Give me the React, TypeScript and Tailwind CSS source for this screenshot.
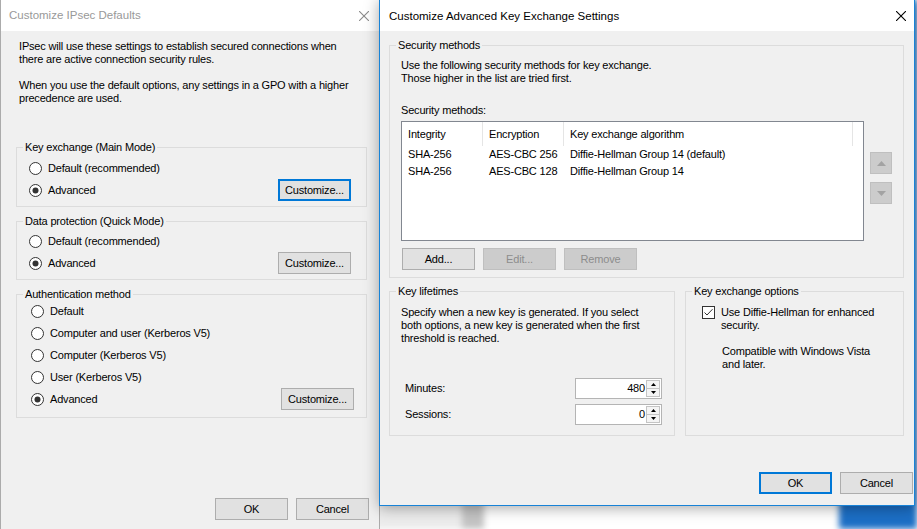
import type { ReactNode } from 'react';

function CloseX({ color }: { color: string }) {
  return (
    <svg width="10" height="10" viewBox="0 0 10 10" fill="none" stroke={color} strokeWidth="1.1">
      <path d="M0 0L10 10M10 0L0 10" />
    </svg>
  );
}

function Button({
  children,
  primary = false,
  disabled = false,
}: {
  children: ReactNode;
  primary?: boolean;
  disabled?: boolean;
}) {
  const look = primary
    ? 'border-2 border-[#0078d7] bg-[#e1e1e1] text-black'
    : disabled
      ? 'border border-[#bfbfbf] bg-[#cccccc] text-[#8c8c8c]'
      : 'border border-[#adadad] bg-[#e1e1e1] text-black';
  return (
    <button
      type="button"
      className={`flex h-[22px] w-[73px] shrink-0 items-center justify-center ${look}`}
    >
      {children}
    </button>
  );
}

function Radio({ checked = false }: { checked?: boolean }) {
  return (
    <svg width="13" height="13" viewBox="0 0 13 13" className="shrink-0">
      <circle cx="6.5" cy="6.5" r="6" fill="#fff" stroke="#333" />
      {checked && <circle cx="6.5" cy="6.5" r="3" fill="#333" />}
    </svg>
  );
}

function RadioRow({ label, checked = false, children }: { label: string; checked?: boolean; children?: ReactNode }) {
  return (
    <div className="flex h-[22px] items-center justify-between">
      <div className="flex items-center gap-[6px]">
        <Radio checked={checked} />
        <span>{label}</span>
      </div>
      {children}
    </div>
  );
}

function Group({ title, className = '', children }: { title: string; className?: string; children: ReactNode }) {
  return (
    <fieldset className={`min-w-0 border border-[#dcdcdc] ${className}`}>
      <legend className="ml-[6px] px-[2px] leading-[13px]">{title}</legend>
      {children}
    </fieldset>
  );
}

function ArrowBtn({ up }: { up: boolean }) {
  return (
    <div className="flex h-[22px] w-[22px] items-center justify-center border border-[#bfbfbf] bg-[#cccccc]">
      <svg width="9" height="5" viewBox="0 0 9 5">
        <path d={up ? 'M0 5L4.5 0L9 5Z' : 'M0 0L4.5 5L9 0Z'} fill="#a3a3a3" />
      </svg>
    </div>
  );
}

function Spin({ value }: { value: string }) {
  return (
    <div className="flex h-[21px] w-[87px] border border-[#b4b4b4] bg-white">
      <div className="flex flex-1 items-center justify-end pr-[1px]">{value}</div>
      <div className="flex w-[15px] flex-col py-[1px] pr-[1px]">
        <div className="flex flex-1 items-center justify-center border border-[#c4c4c4] bg-[#f4f4f4]">
          <svg width="5" height="3" viewBox="0 0 5 3">
            <path d="M0 3L2.5 0L5 3Z" fill="#000" />
          </svg>
        </div>
        <div className="flex flex-1 items-center justify-center border border-t-0 border-[#c4c4c4] bg-[#f4f4f4]">
          <svg width="5" height="3" viewBox="0 0 5 3">
            <path d="M0 0L2.5 3L5 0Z" fill="#000" />
          </svg>
        </div>
      </div>
    </div>
  );
}

const methods = [
  ['SHA-256', 'AES-CBC 256', 'Diffie-Hellman Group 14 (default)'],
  ['SHA-256', 'AES-CBC 128', 'Diffie-Hellman Group 14'],
];

function IpsecDefaults() {
  return (
    <div className="absolute left-0 top-0 flex h-[529px] w-[380px] flex-col border-x border-[#ababab] bg-[#f0f0f0]">
      <div className="flex h-[31px] shrink-0 items-center justify-between bg-white pl-[8px] pr-[10px]">
        <span className="text-[11.5px] tracking-normal text-[#999999]">Customize IPsec Defaults</span>
        <CloseX color="#8a8a8a" />
      </div>

      <div className="flex flex-col pt-[9px]">
        <p className="pl-[18px]">
          IPsec will use these settings to establish secured connections when
          <br />
          there are active connection security rules.
        </p>
        <p className="mt-[13px] pl-[18px]">
          When you use the default options, any settings in a GPO with a higher
          <br />
          precedence are used.
        </p>

        <Group title="Key exchange (Main Mode)" className="ml-[15px] mt-[36px] w-[351px]">
          <div className="pb-[5px] pl-[12px] pr-[15px] pt-[3px]">
            <RadioRow label="Default (recommended)" />
            <RadioRow label="Advanced" checked>
              <Button primary>Customize...</Button>
            </RadioRow>
          </div>
        </Group>

        <Group title="Data protection (Quick Mode)" className="ml-[15px] mt-[8px] w-[351px]">
          <div className="pb-[5px] pl-[12px] pr-[15px] pt-[2px]">
            <RadioRow label="Default (recommended)" />
            <RadioRow label="Advanced" checked>
              <Button>Customize...</Button>
            </RadioRow>
          </div>
        </Group>

        <Group title="Authentication method" className="ml-[15px] mt-[8px] w-[351px]">
          <div className="-mt-[1px] pb-[7px] pl-[14px] pr-[12px]">
            <RadioRow label="Default" />
            <RadioRow label="Computer and user (Kerberos V5)" />
            <RadioRow label="Computer (Kerberos V5)" />
            <RadioRow label="User (Kerberos V5)" />
            <RadioRow label="Advanced" checked>
              <Button>Customize...</Button>
            </RadioRow>
          </div>
        </Group>

        <div className="mt-[80px] flex justify-end gap-[8px] pr-[10px]">
          <Button>OK</Button>
          <Button>Cancel</Button>
        </div>
      </div>
    </div>
  );
}

function KeyExchangeSettings() {
  return (
    <div className="absolute left-[379px] top-[-1px] flex h-[507px] w-[536px] flex-col border border-[#1883d7] bg-[#f0f0f0] shadow-[0_2px_14px_rgba(0,0,0,0.35)]">
      <div className="flex h-[31px] shrink-0 items-center justify-between bg-white pl-[9px] pr-[8px] pt-[1px]">
        <span className="text-[11.5px] tracking-normal text-black">Customize Advanced Key Exchange Settings</span>
        <CloseX color="#000" />
      </div>

      <div className="flex flex-col pl-[9px] pt-[8px]">
        <Group title="Security methods" className="w-[515px]">
          <div className="pb-[7px] pl-[11px] pt-[7px]">
            <p>
              Use the following security methods for key exchange.
              <br />
              Those higher in the list are tried first.
            </p>
            <p className="mt-[19px]">Security methods:</p>
            <div className="mt-[4px] flex gap-[6px]">
              <div className="h-[120px] w-[463px] border border-[#828790] bg-white">
                <div className="flex h-[24px]">
                  <div className="flex w-[81px] items-center border-r border-[#e5e5e5] pl-[6px]">Integrity</div>
                  <div className="flex w-[81px] items-center border-r border-[#e5e5e5] pl-[6px]">Encryption</div>
                  <div className="flex w-[289px] items-center border-r border-[#e5e5e5] pl-[6px]">Key exchange algorithm</div>
                </div>
                {methods.map((row) => (
                  <div key={row[1]} className="flex h-[17px] items-center">
                    <div className="w-[81px] pl-[6px]">{row[0]}</div>
                    <div className="w-[81px] pl-[6px]">{row[1]}</div>
                    <div className="w-[289px] pl-[6px]">{row[2]}</div>
                  </div>
                ))}
              </div>
              <div className="mt-[31px] flex flex-col gap-[8px]">
                <ArrowBtn up />
                <ArrowBtn up={false} />
              </div>
            </div>
            <div className="ml-[1px] mt-[7px] flex gap-[8px]">
              <Button>Add...</Button>
              <Button disabled>Edit...</Button>
              <Button disabled>Remove</Button>
            </div>
          </div>
        </Group>

        <div className="mt-[7px] flex w-[515px] gap-[10px]">
          <Group title="Key lifetimes" className="w-[286px]">
            <div className="pb-[10px] pr-[12px] pt-[8px]">
              <p className="pl-[11px]">
                Specify when a new key is generated. If you select
                <br />
                both options, a new key is generated when the first
                <br />
                threshold is reached.
              </p>
              <div className="mt-[33px] flex items-center justify-between pl-[15px]">
                <span>Minutes:</span>
                <Spin value="480" />
              </div>
              <div className="mt-[5px] flex items-center justify-between pl-[15px]">
                <span>Sessions:</span>
                <Spin value="0" />
              </div>
            </div>
          </Group>

          <Group title="Key exchange options" className="w-[219px]">
            <div className="flex items-start gap-[6px] pl-[16px] pt-[8px]">
              <svg width="13" height="13" viewBox="0 0 13 13" className="shrink-0">
                <rect x="0.5" y="0.5" width="12" height="12" fill="#fff" stroke="#333" />
                <path d="M2.5 6.5L5 9L10.5 3.2" fill="none" stroke="#333" strokeWidth="1" />
              </svg>
              <div>
                <p>
                  Use Diffie-Hellman for enhanced
                  <br />
                  security.
                </p>
                <p className="mt-[13px] pl-[1px]">
                  Compatible with Windows Vista
                  <br />
                  and later.
                </p>
              </div>
            </div>
          </Group>
        </div>

        <div className="mt-[36px] flex w-[524px] justify-end gap-[8px]">
          <Button primary>OK</Button>
          <Button>Cancel</Button>
        </div>
      </div>
    </div>
  );
}

export default function App() {
  return (
    <div className="relative h-[529px] w-[917px] overflow-hidden bg-white font-['Liberation_Sans',Arial,sans-serif] text-[11px] leading-[13px] tracking-[-0.18px] text-black">
      {/* desktop behind the dialogs */}
      <div className="flex h-full blur-[3px]">
        <div className="w-[462px] bg-[#ececec]" />
        <div className="w-[22px] bg-[#c4c4c4]" />
        <div className="flex-1 bg-white" />
        <div className="w-[78px] bg-[#1c6fc6]" />
      </div>
      <IpsecDefaults />
      <KeyExchangeSettings />
    </div>
  );
}
